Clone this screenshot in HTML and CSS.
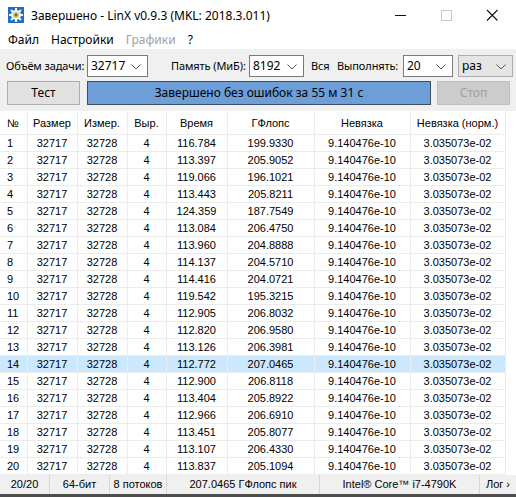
FILE: index.html
```html
<!DOCTYPE html>
<html lang="ru">
<head>
    <meta charset="UTF-8">
    <title>LinX</title>
    <link rel="stylesheet" href="styles.css">
</head>
<body>
<div class="window">
    <div class="titlebar">
        <svg class="app-icon" width="16" height="16" viewBox="0 0 16 16">
            <rect width="16" height="16" fill="#1f6fc4"/>
            <g fill="#f4f4f4">
                <circle cx="8" cy="8" r="5"/>
                <rect x="7" y="1" width="2" height="14"/>
                <rect x="1" y="7" width="14" height="2"/>
                <rect x="7" y="1" width="2" height="14" transform="rotate(45 8 8)"/>
                <rect x="7" y="1" width="2" height="14" transform="rotate(-45 8 8)"/>
            </g>
            <circle cx="8" cy="8" r="3" fill="#d8c64a"/>
            <circle cx="8" cy="8" r="1.4" fill="#2a6fb8"/>
        </svg>
        <span class="title">Завершено - LinX v0.9.3 (MKL: 2018.3.011)</span>
        <div class="controls">
            <svg width="46" height="30" viewBox="0 0 46 30"><rect x="18" y="15" width="11" height="1" fill="#111"/></svg>
            <svg width="46" height="30" viewBox="0 0 46 30"><rect x="18.5" y="10.5" width="10" height="10" fill="none" stroke="#c8c8c8"/></svg>
            <svg width="46" height="30" viewBox="0 0 46 30"><path d="M18 10 L28.5 20.5 M28.5 10 L18 20.5" stroke="#111" stroke-width="1.1"/></svg>
        </div>
    </div>

    <div class="menubar">
        <span>Файл</span>
        <span>Настройки</span>
        <span class="disabled">Графики</span>
        <span>?</span>
    </div>

    <div class="toolbar">
        <div class="row">
            <span class="label lbl-size">Объём задачи:</span>
            <div class="combo w-size">32717<svg class="chev" width="10" height="6" viewBox="0 0 10 6"><path d="M0.5 0.5 L5 5 L9.5 0.5" fill="none" stroke="#555"/></svg></div>
            <span class="label lbl-mem">Память (МиБ):</span>
            <div class="combo w-mem">8192<svg class="chev" width="10" height="6" viewBox="0 0 10 6"><path d="M0.5 0.5 L5 5 L9.5 0.5" fill="none" stroke="#555"/></svg></div>
            <span class="label lbl-all">Вся</span>
            <span class="label lbl-run">Выполнять:</span>
            <div class="combo w-runs">20<svg class="chev" width="10" height="6" viewBox="0 0 10 6"><path d="M0.5 0.5 L5 5 L9.5 0.5" fill="none" stroke="#555"/></svg></div>
            <div class="combo combo-list w-unit">раз<svg class="chev" width="10" height="6" viewBox="0 0 10 6"><path d="M0.5 0.5 L5 5 L9.5 0.5" fill="none" stroke="#555"/></svg></div>
        </div>
        <div class="row">
            <button class="btn btn-test">Тест</button>
            <div class="progress">Завершено без ошибок за 55 м 31 с</div>
            <button class="btn btn-stop" disabled>Стоп</button>
        </div>
    </div>

    <div class="grid">
        <table>
            <thead>
                <tr>
                    <th class="c-num">№</th>
                    <th class="c-size">Размер</th>
                    <th class="c-lda">Измер.</th>
                    <th class="c-al">Выр.</th>
                    <th class="c-time">Время</th>
                    <th class="c-gf">ГФлопс</th>
                    <th class="c-res">Невязка</th>
                    <th class="c-norm">Невязка (норм.)</th>
                </tr>
            </thead>
            <tbody id="rows"></tbody>
        </table>
    </div>

    <div class="statusbar">
        <span class="s1">20/20</span>
        <span class="s2">64-бит</span>
        <span class="s3">8 потоков</span>
        <span class="s4">207.0465 ГФлопс пик</span>
        <span class="s5">Intel® Core™ i7-4790K</span>
        <span class="s6">Лог ›</span>
    </div>
</div>
<script>
    const results = [
        ["116.784", "199.9330"], ["113.397", "205.9052"], ["119.066", "196.1021"],
        ["113.443", "205.8211"], ["124.359", "187.7549"], ["113.084", "206.4750"],
        ["113.960", "204.8888"], ["114.137", "204.5710"], ["114.416", "204.0721"],
        ["119.542", "195.3215"], ["112.905", "206.8032"], ["112.820", "206.9580"],
        ["113.126", "206.3981"], ["112.772", "207.0465"], ["112.900", "206.8118"],
        ["113.404", "205.8922"], ["112.966", "206.6910"], ["113.451", "205.8077"],
        ["113.107", "206.4330"], ["113.837", "205.1094"]
    ];
    const tbody = document.getElementById("rows");
    results.forEach((r, i) => {
        let tr = document.createElement("tr");
        if (i === 13) tr.className = "selected";
        tr.innerHTML = "<td class='c-num'>" + (i + 1) + "</td><td>32717</td><td>32728</td><td>4</td>" +
            "<td>" + r[0] + "</td><td>" + r[1] + "</td><td>9.140476e-10</td><td>3.035073e-02</td>";
        tbody.appendChild(tr);
    });
</script>
</body>
</html>
```

FILE: styles.css
```css
body {
    margin: 0;
    background: #ffffff;
    font-family: "Noto Sans", "Open Sans", sans-serif;
    font-size: 12px;
    color: #000;
}
.window {
    width: 516px;
    height: 497px;
    display: flex;
    flex-direction: column;
    overflow: hidden;
}
.titlebar {
    height: 31px;
    display: flex;
    align-items: center;
    background: #fff;
}
.app-icon {
    margin-left: 8px;
    margin-right: 7px;
}
.title {
    font-size: 12px;
    flex: 1;
    white-space: nowrap;
}
.controls {
    display: flex;
    align-self: flex-start;
    margin-right: 1px;
}
.menubar {
    height: 18px;
    display: flex;
    align-items: center;
    gap: 12px;
    padding-left: 8px;
    background: #fff;
}
.menubar .disabled {
    color: #a0a0a0;
}
.toolbar {
    background: #f0f0f0;
    height: 63px;
    box-sizing: border-box;
    padding-top: 6px;
}
.row {
    display: flex;
    align-items: center;
}
.row + .row {
    margin-top: 4px;
}
.label {
    font-size: 11px;
    letter-spacing: -0.1px;
    white-space: nowrap;
    flex-shrink: 0;
}
.lbl-size { margin-left: 6px; width: 81px; }
.lbl-mem { margin-left: 23px; width: 78px; }
.lbl-all { margin-left: 7px; width: 26px; }
.lbl-run { width: 66px; }
.combo {
    position: relative;
    flex-shrink: 0;
    height: 22px;
    box-sizing: border-box;
    border: 1px solid #7a7a7a;
    background: #fff;
    padding-left: 3px;
    line-height: 20px;
    font-size: 12px;
}
.combo-list {
    background: #e5e5e5;
    border-color: #adadad;
    margin-left: 5px;
}
.chev {
    position: absolute;
    right: 6px;
    top: 8px;
}
.w-size { width: 61px; }
.w-mem { width: 55px; }
.w-runs { width: 50px; }
.w-unit { width: 55px; }
.btn {
    height: 24px;
    box-sizing: border-box;
    font-family: "Noto Sans", "Open Sans", sans-serif;
    font-size: 12px;
    background: #e1e1e1;
    border: 1px solid #adadad;
    padding: 0;
}
.btn-test {
    margin-left: 7px;
    width: 73px;
}
.btn-stop {
    margin-left: 6px;
    width: 73px;
    background: #cccccc;
    border-color: #bfbfbf;
    color: #a0a0a0;
}
.progress {
    margin-left: 7px;
    width: 344px;
    height: 24px;
    box-sizing: border-box;
    background: #6d9ed8;
    border: 1px solid #3f4f63;
    text-align: center;
    line-height: 22px;
    font-size: 12px;
}
.grid {
    flex: 1;
    background: #fff;
}
table {
    border-collapse: collapse;
    table-layout: fixed;
    width: 498px;
    font-family: "Liberation Sans", Arial, sans-serif;
    font-size: 11px;
}
th {
    font-weight: normal;
    height: 23px;
    padding: 0;
    border-right: 1px solid #ececec;
    border-bottom: 1px solid #ececec;
    text-align: center;
}
td {
    height: 16px;
    padding: 0;
    border-right: 1px solid #ececec;
    border-bottom: 1px solid #ececec;
    text-align: center;
    white-space: nowrap;
}
.c-num { width: 27px; text-align: left; padding-left: 7px; box-sizing: border-box; }
.c-size { width: 49px; }
.c-lda { width: 49px; }
.c-al { width: 38px; }
.c-time { width: 60px; }
.c-gf { width: 86px; }
.c-res { width: 95px; }
.c-norm { width: 94px; }
tr.selected td {
    background: #cce8ff;
}
.statusbar {
    height: 22px;
    box-sizing: border-box;
    display: flex;
    align-items: center;
    background: #f0f0f0;
    border-bottom: 3px solid #4d4d4d;
    font-family: "Liberation Sans", Arial, sans-serif;
    font-size: 11px;
}
.statusbar span {
    text-align: center;
    border-right: 1px solid #d7d7d7;
    height: 19px;
    line-height: 19px;
    box-sizing: border-box;
}
.s1 { width: 50px; }
.s2 { width: 60px; }
.s3 { width: 57px; }
.s4 { width: 153px; }
.s5 { width: 160px; }
.s6 { flex: 1; border-right: none !important; }
```
